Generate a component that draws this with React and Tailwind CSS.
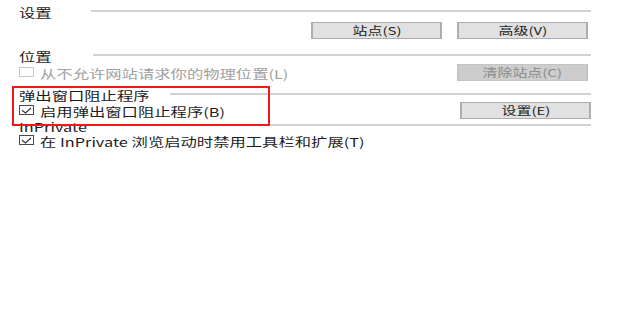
import React from 'react';

const font = { fontFamily: '"Noto Sans CJK SC", "Noto Sans", sans-serif' };

// screenshot is stretched sideways, so labels get a horizontal scale
function Label({ children, className = '' }) {
  return (
    <span className={`inline-block origin-left scale-x-[1.36] whitespace-nowrap text-[12px] leading-none ${className}`}>
      {children}
    </span>
  );
}

function SectionHeader({ title, lineStart, className = '' }) {
  return (
    <div className={`flex items-center ${className}`}>
      <div className={`${lineStart} shrink-0`}>
        <Label className="text-[#1c1c1c]">{title}</Label>
      </div>
      <div className="flex-1 h-[2px] bg-[#d2d2d2]" />
    </div>
  );
}

function Btn({ children, disabled }) {
  return (
    <div
      className={`w-[131px] h-[17px] flex items-center justify-center border-y border-x-2 ${
        disabled ? 'bg-[#cdcdcd] border-[#c4c4c4] text-[#8a8a8a]' : 'bg-[#e1e1e1] border-[#adadad] text-[#1e1e1e]'
      }`}
    >
      <span className="inline-block origin-center scale-x-[1.36] whitespace-nowrap text-[11px] leading-none">{children}</span>
    </div>
  );
}

function Check({ checked, disabled, children }) {
  return (
    <div className="flex items-center">
      <div
        className={`w-[15px] h-[10px] border flex items-center justify-center ${
          disabled ? 'border-[#c6c6c6] bg-white' : 'border-[#4a4a4a] bg-white'
        }`}
      >
        {checked && (
          <svg width="11" height="7" viewBox="0 0 11 7" fill="none">
            <path d="M1 3.2 L4.5 6 L10 1" stroke="#333" strokeWidth="1.2" />
          </svg>
        )}
      </div>
      <div className="ml-[6px]">
        <Label className={disabled ? 'text-[#a0a0a0]' : 'text-[#1e1e1e]'}>{children}</Label>
      </div>
    </div>
  );
}

export default function App() {
  return (
    <div className="w-[620px] h-[309px] bg-white relative overflow-hidden" style={font}>
      <div className="w-[591px] pl-[19px] flex flex-col">
        <SectionHeader title="设置" lineStart="w-[72px]" className="h-[22px]" />
        <div className="h-[17px] flex justify-end gap-[15px] pr-[3px]">
          <Btn>站点(S)</Btn>
          <Btn>高级(V)</Btn>
        </div>

        <SectionHeader title="位置" lineStart="w-[74px]" className="h-[18px] mt-[7px]" />
        <div className="h-[16px] flex items-center justify-between pr-[3px]">
          <Check disabled>从不允许网站请求你的物理位置(L)</Check>
          <Btn disabled>清除站点(C)</Btn>
        </div>

        <SectionHeader title="弹出窗口阻止程序" lineStart="w-[151px]" className="h-[15px] mt-[6px]" />
        <div className="h-[18px] flex items-center justify-between">
          <Check checked>启用弹出窗口阻止程序(B)</Check>
          <Btn>设置(E)</Btn>
        </div>

        <SectionHeader title="InPrivate" lineStart="w-[81px]" className="h-[12px]" />
        <div className="h-[18px] flex items-center">
          <Check checked>在 InPrivate 浏览启动时禁用工具栏和扩展(T)</Check>
        </div>
      </div>

      {/* red annotation box */}
      <div className="absolute left-[12px] top-[86px] w-[258px] h-[40px] border-2 border-[#f01818] pointer-events-none" />
    </div>
  );
}
